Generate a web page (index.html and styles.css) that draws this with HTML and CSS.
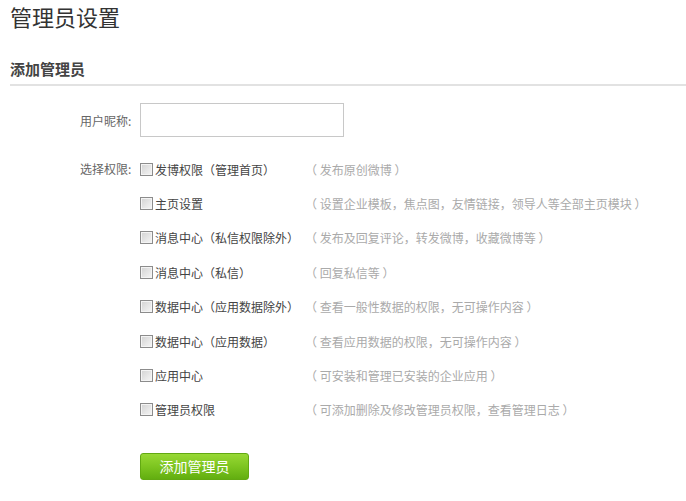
FILE: index.html
```html
<!DOCTYPE html>
<html lang="zh-CN">
<head>
<meta charset="utf-8">
<title>管理员设置</title>
<link rel="stylesheet" href="styles.css">
</head>
<body>
<div class="page">
  <h1 class="title">管理员设置</h1>
  <h2 class="section-head">添加管理员</h2>
  <form class="form">
    <div class="field">
      <label class="field-label" for="nick">用户昵称:</label>
      <input class="text-input" id="nick" type="text">
    </div>
    <div class="field perms">
      <span class="field-label perm-label">选择权限:</span>
      <ul class="perm-list">
        <li class="perm-row"><label class="perm-name"><input type="checkbox" class="chk">发博权限（管理首页）</label><span class="perm-desc">（ 发布原创微博 ）</span></li>
        <li class="perm-row"><label class="perm-name"><input type="checkbox" class="chk">主页设置</label><span class="perm-desc">（ 设置企业模板，焦点图，友情链接，领导人等全部主页模块 ）</span></li>
        <li class="perm-row"><label class="perm-name"><input type="checkbox" class="chk">消息中心（私信权限除外）</label><span class="perm-desc">（ 发布及回复评论，转发微博，收藏微博等 ）</span></li>
        <li class="perm-row"><label class="perm-name"><input type="checkbox" class="chk">消息中心（私信）</label><span class="perm-desc">（ 回复私信等 ）</span></li>
        <li class="perm-row"><label class="perm-name"><input type="checkbox" class="chk">数据中心（应用数据除外）</label><span class="perm-desc">（ 查看一般性数据的权限，无可操作内容 ）</span></li>
        <li class="perm-row"><label class="perm-name"><input type="checkbox" class="chk">数据中心（应用数据）</label><span class="perm-desc">（ 查看应用数据的权限，无可操作内容 ）</span></li>
        <li class="perm-row"><label class="perm-name"><input type="checkbox" class="chk">应用中心</label><span class="perm-desc">（ 可安装和管理已安装的企业应用 ）</span></li>
        <li class="perm-row"><label class="perm-name"><input type="checkbox" class="chk">管理员权限</label><span class="perm-desc">（ 可添加删除及修改管理员权限，查看管理日志 ）</span></li>
      </ul>
    </div>
    <div class="actions">
      <button type="button" class="btn-add">添加管理员</button>
    </div>
  </form>
</div>
</body>
</html>
```

FILE: styles.css
```css
html, body {
  margin: 0;
  padding: 0;
  background: #fff;
}

body {
  font-family: "Noto Sans CJK SC", "Noto Sans", sans-serif;
  font-size: 12px;
  color: #444;
}

.page {
  padding-left: 10px;
}

.title {
  margin: 0;
  height: 32px;
  line-height: 32px;
  font-size: 22px;
  font-weight: normal;
  color: #333;
}

.section-head {
  margin: 26px 0 0;
  height: 22px;
  line-height: 22px;
  padding-bottom: 4px;
  font-size: 15px;
  font-weight: bold;
  color: #444;
  border-bottom: 2px solid #e2e2e2;
}

.form {
  margin: 17px 0 0 70px;
}

.field {
  display: flex;
  align-items: center;
}

.field-label {
  width: 60px;
  color: #666;
  font-size: 12px;
}

.text-input {
  box-sizing: border-box;
  width: 204px;
  height: 34px;
  margin: 0;
  border: 1px solid #c8c8c8;
  padding: 0 6px;
  font: inherit;
  outline: none;
}

.perms {
  margin-top: 15px;
  align-items: flex-start;
}

.perm-label {
  height: 34.4px;
  line-height: 34.4px;
}

.perm-list {
  list-style: none;
  margin: 0;
  padding: 0;
}

.perm-row {
  display: flex;
  align-items: center;
  height: 34.4px;
}

.perm-name {
  display: flex;
  align-items: center;
  width: 165px;
  color: #444;
}

.chk {
  appearance: none;
  -webkit-appearance: none;
  box-sizing: border-box;
  width: 13px;
  height: 13px;
  margin: 0 2px 0 0;
  border: 1px solid #8c8c8c;
  box-shadow: inset 0 0 0 1px #f4f4f4;
  background: linear-gradient(135deg, #d2d2d2 0%, #e6e6e6 55%, #f6f6f6 100%);
}

.perm-desc {
  color: #aaa;
}

.actions {
  margin: 26px 0 0 60px;
}

.btn-add {
  box-sizing: border-box;
  width: 109px;
  height: 27px;
  padding: 0;
  border: 1px solid #62a912;
  border-radius: 3px;
  background: linear-gradient(to bottom, #97d834 0%, #7dc520 50%, #62ae10 100%);
  color: #fff;
  font-family: "Noto Sans CJK SC", sans-serif;
  font-size: 14px;
  line-height: 25px;
  cursor: pointer;
}
```
